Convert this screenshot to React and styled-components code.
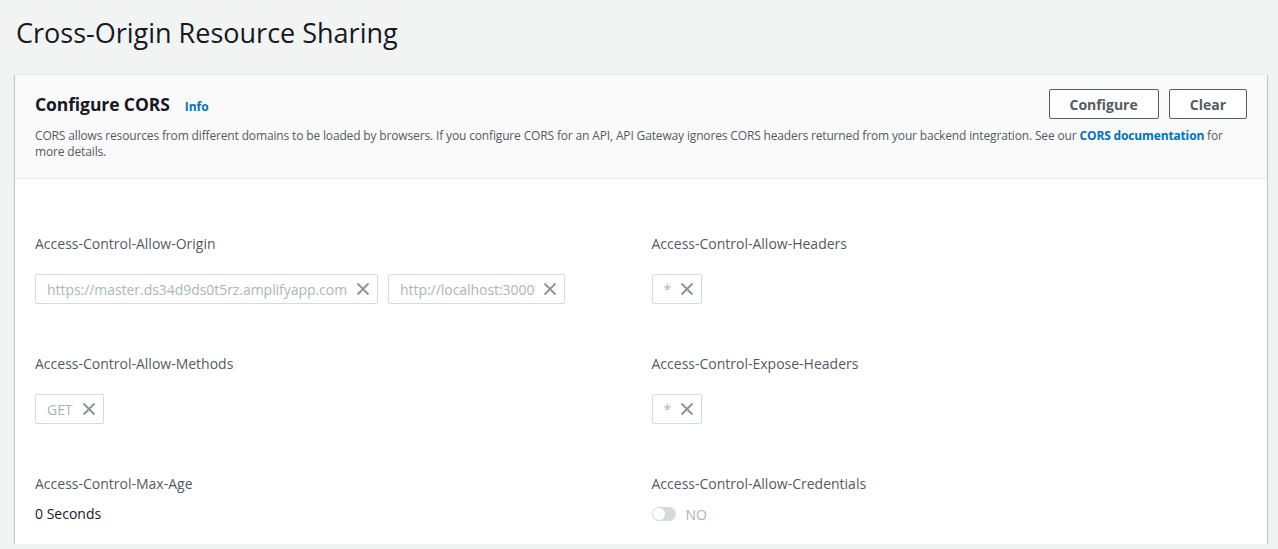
import React from "react";
import styled, { createGlobalStyle } from "styled-components";

const Global = createGlobalStyle`
  html, body { margin: 0; padding: 0; background: #f2f3f3; }
  body { font-family: "Open Sans", "Liberation Sans", sans-serif; color: #16191f; }
  * { box-sizing: border-box; }
`;

const Page = styled.div`
  padding: 15px 11px 0 15px;
`;

const Title = styled.h1`
  margin: 0 0 0 1px;
  font-size: 27px;
  line-height: 36px;
  font-weight: 400;
  color: #16191f;
`;

const Card = styled.section`
  margin-top: 23px;
  background: #fff;
  border-top: 1px solid #eaeded;
  box-shadow: 0 1px 1px 0 rgba(0, 28, 36, 0.3), 1px 1px 1px 0 rgba(0, 28, 36, 0.15),
    -1px 1px 1px 0 rgba(0, 28, 36, 0.15);
`;

const Header = styled.header`
  background: #fafafa;
  border-bottom: 1px solid #eaeded;
  padding: 14px 20px 18px;
`;

const HeaderRow = styled.div`
  display: flex;
  align-items: center;
  justify-content: space-between;
`;

const HeadingGroup = styled.div`
  display: flex;
  align-items: baseline;
  gap: 15px;
`;

const Heading = styled.h2`
  margin: 0;
  font-size: 17.5px;
  letter-spacing: -0.1px;
  font-weight: 700;
  line-height: 22px;
  color: #16191f;
`;

const InfoLink = styled.a`
  font-size: 12px;
  font-weight: 700;
  color: #0073bb;
  text-decoration: none;
`;

const Actions = styled.div`
  display: flex;
  gap: 10px;
`;

const Button = styled.button`
  height: 30px;
  padding: 0 ${(p) => p.$px || 20}px;
  border: 1px solid #545b64;
  border-radius: 2px;
  background: #fff;
  color: #545b64;
  font-family: inherit;
  font-size: 14px;
  font-weight: 700;
  cursor: pointer;
`;

const Description = styled.p`
  margin: 9px 0 0;
  font-size: 12px;
  letter-spacing: -0.15px;
  line-height: 16px;
  color: #545b64;
`;

const DocLink = styled.a`
  color: #0073bb;
  font-weight: 700;
  text-decoration: none;
`;

const Body = styled.div`
  display: grid;
  grid-template-columns: 1fr 1fr;
  column-gap: 21px;
  row-gap: 50px;
  padding: 55px 20px 20px;
`;

const Field = styled.div`
  display: flex;
  flex-direction: column;
  gap: ${(p) => (p.$tight ? 10 : 20)}px;
`;

const Label = styled.div`
  font-size: 14px;
  line-height: 20px;
  color: #545b64;
`;

const Tokens = styled.div`
  display: flex;
  gap: 10px;
`;

const Token = styled.div`
  display: inline-flex;
  align-items: center;
  height: 30px;
  padding: 0 7px 0 11px;
  gap: 9px;
  border: 1px solid #d5dbdb;
  border-radius: 2px;
  background: #fff;
  font-size: 14px;
  letter-spacing: -0.05px;
  color: #aab7b8;
  white-space: nowrap;
`;

const Value = styled.div`
  font-size: 14px;
  line-height: 20px;
  color: #16191f;
`;

const ToggleRow = styled.div`
  display: flex;
  align-items: center;
  gap: 10px;
  height: 20px;
`;

const Track = styled.span`
  position: relative;
  width: 24px;
  height: 14px;
  border-radius: 7px;
  background: #d5dbdb;
`;

const Knob = styled.span`
  position: absolute;
  top: 1px;
  left: 1px;
  width: 12px;
  height: 12px;
  border-radius: 50%;
  background: #fff;
`;

const ToggleText = styled.span`
  font-size: 14px;
  color: #aab7b8;
`;

const XIcon = () => (
  <svg width="14" height="14" viewBox="0 0 14 14" fill="none">
    <path d="M1.5 1.5 L12.5 12.5 M12.5 1.5 L1.5 12.5" stroke="#879596" strokeWidth="1.8" />
  </svg>
);

const TokenItem = ({ children }) => (
  <Token>
    {children}
    <XIcon />
  </Token>
);

export default function App() {
  return (
    <>
      <Global />
      <Page>
        <Title>Cross-Origin Resource Sharing</Title>
        <Card>
          <Header>
            <HeaderRow>
              <HeadingGroup>
                <Heading>Configure CORS</Heading>
                <InfoLink href="#">Info</InfoLink>
              </HeadingGroup>
              <Actions>
                <Button $px={20}>Configure</Button>
                <Button $px={20}>Clear</Button>
              </Actions>
            </HeaderRow>
            <Description>
              CORS allows resources from different domains to be loaded by browsers. If you configure CORS for an API,
              API Gateway ignores CORS headers returned from your backend integration. See our{" "}
              <DocLink href="#">CORS documentation</DocLink> for more details.
            </Description>
          </Header>
          <Body>
            <Field>
              <Label>Access-Control-Allow-Origin</Label>
              <Tokens>
                <TokenItem>https://master.ds34d9ds0t5rz.amplifyapp.com</TokenItem>
                <TokenItem>http://localhost:3000</TokenItem>
              </Tokens>
            </Field>
            <Field>
              <Label>Access-Control-Allow-Headers</Label>
              <Tokens>
                <TokenItem>*</TokenItem>
              </Tokens>
            </Field>
            <Field>
              <Label>Access-Control-Allow-Methods</Label>
              <Tokens>
                <TokenItem>GET</TokenItem>
              </Tokens>
            </Field>
            <Field>
              <Label>Access-Control-Expose-Headers</Label>
              <Tokens>
                <TokenItem>*</TokenItem>
              </Tokens>
            </Field>
            <Field $tight>
              <Label>Access-Control-Max-Age</Label>
              <Value>0 Seconds</Value>
            </Field>
            <Field $tight>
              <Label>Access-Control-Allow-Credentials</Label>
              <ToggleRow>
                <Track>
                  <Knob />
                </Track>
                <ToggleText>NO</ToggleText>
              </ToggleRow>
            </Field>
          </Body>
        </Card>
      </Page>
    </>
  );
}
